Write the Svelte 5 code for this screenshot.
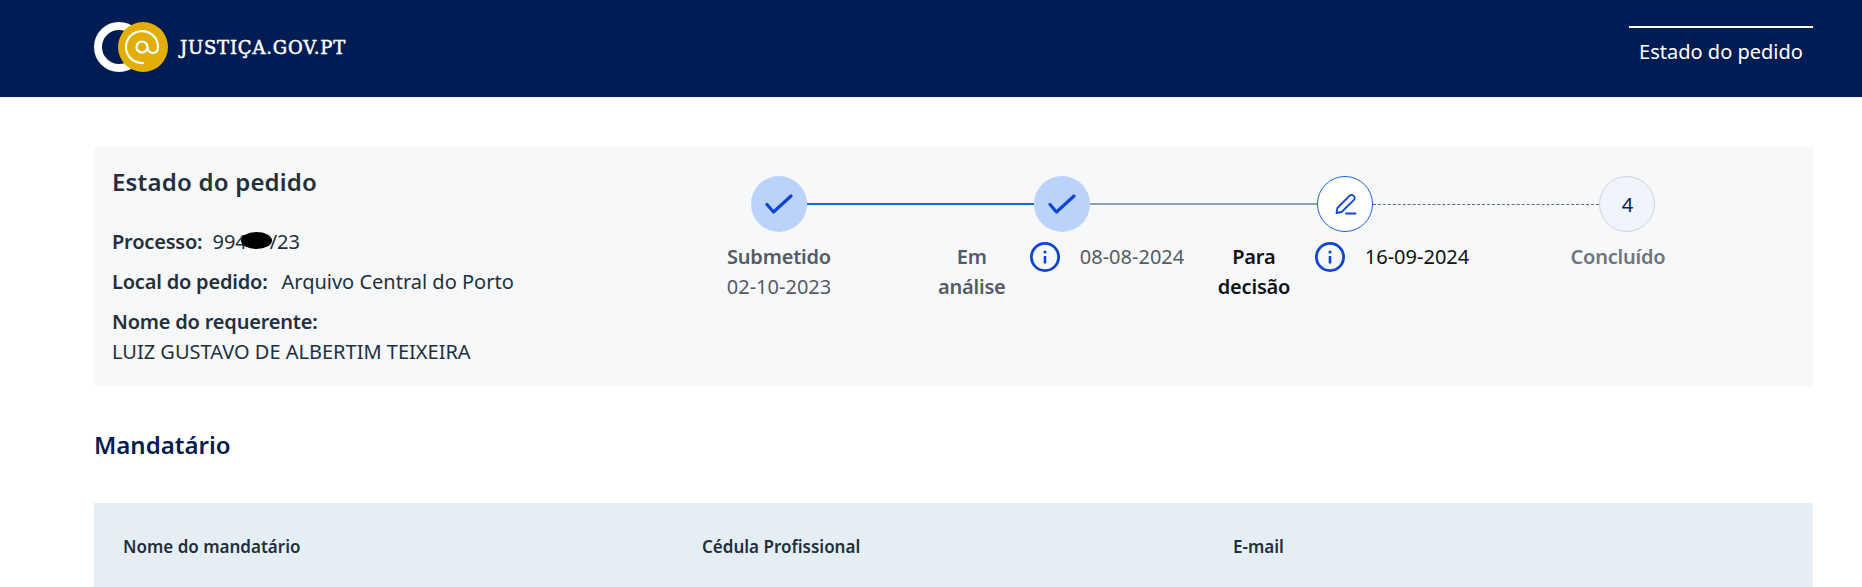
<script>
  const steps = [
    { label: 'Submetido', state: 'done', date: '02-10-2023' },
    { label: 'Em análise', state: 'done', date: '08-08-2024', info: true },
    { label: 'Para decisão', state: 'current', date: '16-09-2024', info: true },
    { label: 'Concluído', state: 'todo' }
  ];
</script>

<header class="topbar">
  <a class="brand" href="#top">
    <svg class="logo" width="75" height="50" viewBox="0 0 75 50" fill="none">
      <circle cx="25" cy="25" r="21" stroke="#fff" stroke-width="8" />
      <circle cx="49" cy="25" r="25" fill="#e3ae04" />
      <circle cx="48" cy="25" r="5.5" stroke="#fff" stroke-width="2.2" />
      <path d="M49 41A16 16 0 1 1 64 25c0 4-2 6-5 6s-5.5-2-5.5-6" stroke="#fff" stroke-width="2.2" stroke-linecap="round" />
    </svg>
    <span class="brand-name">JUSTIÇA.GOV.PT</span>
  </a>
  <nav class="tab">Estado do pedido</nav>
</header>

<main class="page">
  <section class="card">
    <div class="summary">
      <h1>Estado do pedido</h1>
      <p class="row"><b>Processo:</b><span class="ref">994<span class="hidden-digits">00</span>/23<i class="blot"></i></span></p>
      <p class="row"><b>Local do pedido:</b><span class="place">Arquivo Central do Porto</span></p>
      <p class="row stacked"><b>Nome do requerente:</b><span>LUIZ GUSTAVO DE ALBERTIM TEIXEIRA</span></p>
    </div>

    <div class="stepper">
      <div class="track">
        {#each steps as step, i}
          {#if i > 0}
            <span class="line line-{i}"></span>
          {/if}
          <span class="dot {step.state}">
            {#if step.state === 'done'}
              <svg width="28" height="28" viewBox="0 0 28 28" fill="none">
                <path d="M2 14.5l6.5 7.5L26 6" stroke="#0f45d4" stroke-width="3.2" stroke-linecap="round" stroke-linejoin="round" />
              </svg>
            {:else if step.state === 'current'}
              <svg width="24" height="24" viewBox="0 0 24 24" fill="none">
                <path d="M3.5 21l.9-5L16.6 3.6a2.6 2.6 0 0 1 3.7 0l.6.6a2.6 2.6 0 0 1 0 3.7L8.6 20z" stroke="#0f45d4" stroke-width="1.8" stroke-linejoin="round" />
                <path d="M13 21.5h9.5" stroke="#0f45d4" stroke-width="1.8" stroke-linecap="round" />
              </svg>
            {:else}
              {i + 1}
            {/if}
          </span>
        {/each}
      </div>

      <div class="details">
        {#each steps as step}
          <div class="detail {step.state}" class:wide={step.info}>
            <span class="label">{step.label}</span>
            {#if step.info}
              <svg class="info" width="30" height="30" viewBox="0 0 30 30" fill="none">
                <circle cx="15" cy="15" r="13.6" stroke="#0f45d4" stroke-width="2.8" />
                <circle cx="15" cy="10" r="1.6" fill="#0f45d4" />
                <path d="M15 14v7.5" stroke="#0f45d4" stroke-width="2.6" />
              </svg>
            {/if}
            {#if step.date}
              <span class="date">{step.date}</span>
            {/if}
          </div>
        {/each}
      </div>
    </div>
  </section>

  <h2>Mandatário</h2>
  <div class="table-head">
    <span>Nome do mandatário</span>
    <span>Cédula Profissional</span>
    <span>E-mail</span>
  </div>
</main>

<style>
  :global(body) {
    font-family: "Noto Sans", sans-serif;
    color: #22303c;
    background: #fff;
    overflow: hidden;
  }

  .topbar {
    height: 97px;
    background: #001c54;
    box-shadow: 0 1px 4px rgba(0, 0, 0, 0.08);
    display: flex;
    justify-content: space-between;
    padding: 0 49px 0 94px;
  }
  .brand {
    display: flex;
    align-items: center;
    gap: 11px;
    height: 94px;
    color: #fff;
    text-decoration: none;
  }
  .brand-name {
    font-family: "DejaVu Serif", serif;
    font-weight: 400;
    font-size: 18px;
    letter-spacing: 0.8px;
    -webkit-text-stroke: 0.5px #fff;
  }
  .tab {
    width: 184px;
    box-sizing: border-box;
    margin-top: 26px;
    height: 71px;
    border-top: 2px solid #fff;
    padding-top: 10px;
    text-align: center;
    color: #fff;
    font-size: 20px;
    line-height: 28px;
  }

  .page {
    padding: 0 49px 0 94px;
  }
  .card {
    margin-top: 50px;
    height: 239px;
    background: #f6f8fa;
    display: flex;
  }
  .summary {
    width: 543.5px;
    flex: none;
    padding: 17px 0 0 18px;
    box-sizing: border-box;
  }
  h1 {
    margin: 0 0 27px;
    font-size: 24px;
    line-height: 36px;
    font-weight: 600;
    letter-spacing: 0.2px;
  }
  .row {
    margin: 0 0 10px;
    font-size: 20px;
    line-height: 30px;
    display: flex;
    gap: 10px;
  }
  .row b {
    font-weight: 600;
    letter-spacing: -0.2px;
  }
  .row .place {
    margin-left: 4px;
  }
  .row.stacked {
    flex-direction: column;
    gap: 0;
  }
  .ref {
    position: relative;
  }
  .hidden-digits {
    color: transparent;
  }
  .blot {
    position: absolute;
    left: 29px;
    top: 5px;
    width: 31px;
    height: 17px;
    border-radius: 50%;
    background: #000;
  }

  .stepper {
    width: 1132px;
    padding-top: 29px;
  }
  .track {
    display: flex;
    align-items: center;
    margin: 0 114px 0 113.5px;
  }
  .dot {
    flex: none;
    width: 56px;
    height: 56px;
    box-sizing: border-box;
    border-radius: 50%;
    display: flex;
    align-items: center;
    justify-content: center;
    font-size: 20px;
    color: #001c54;
  }
  .dot.done {
    background: #bbd2fb;
  }
  .dot.current {
    background: #fff;
    border: 1px solid #1a5fe0;
  }
  .dot.todo {
    background: #f0f5fd;
    border: 1px solid #cfd6e0;
  }
  .line {
    flex: 1;
    height: 2px;
    background: #1268e3;
  }
  .line-2 {
    background: #8aa0b4;
  }
  .line-3 {
    height: 0;
    background: none;
    border-top: 1px dashed #5f6f80;
  }

  .details {
    display: grid;
    grid-template-columns: repeat(4, 283px);
    margin-top: 10px;
  }
  .detail {
    display: flex;
    flex-direction: column;
    align-items: center;
    font-size: 20px;
    line-height: 30px;
    color: #555b63;
  }
  .detail.wide {
    flex-direction: row;
    align-items: flex-start;
    justify-content: center;
    padding-right: 4px;
  }
  .detail.wide .label {
    width: 72px;
    margin-right: 22px;
    text-align: center;
  }
  .detail.wide .date {
    margin-left: 20px;
  }
  .detail.current.wide {
    padding-right: 3px;
  }
  .detail.current.wide .label {
    margin-right: 25px;
  }
  .label {
    font-weight: 600;
    letter-spacing: -0.2px;
  }
  .detail.current {
    color: #111;
  }
  .detail.todo {
    color: #6d7681;
    padding-right: 20px;
  }

  h2 {
    margin: 41px 0 40px;
    font-size: 24px;
    line-height: 36px;
    font-weight: 600;
    color: #001c54;
  }
  .table-head {
    height: 84px;
    background: #e6eef5;
    display: grid;
    grid-template-columns: 579px 531px 1fr;
    align-items: center;
    padding: 3px 0 0 29px;
    box-sizing: border-box;
    font-size: 17px;
    font-weight: 600;
  }
</style>
